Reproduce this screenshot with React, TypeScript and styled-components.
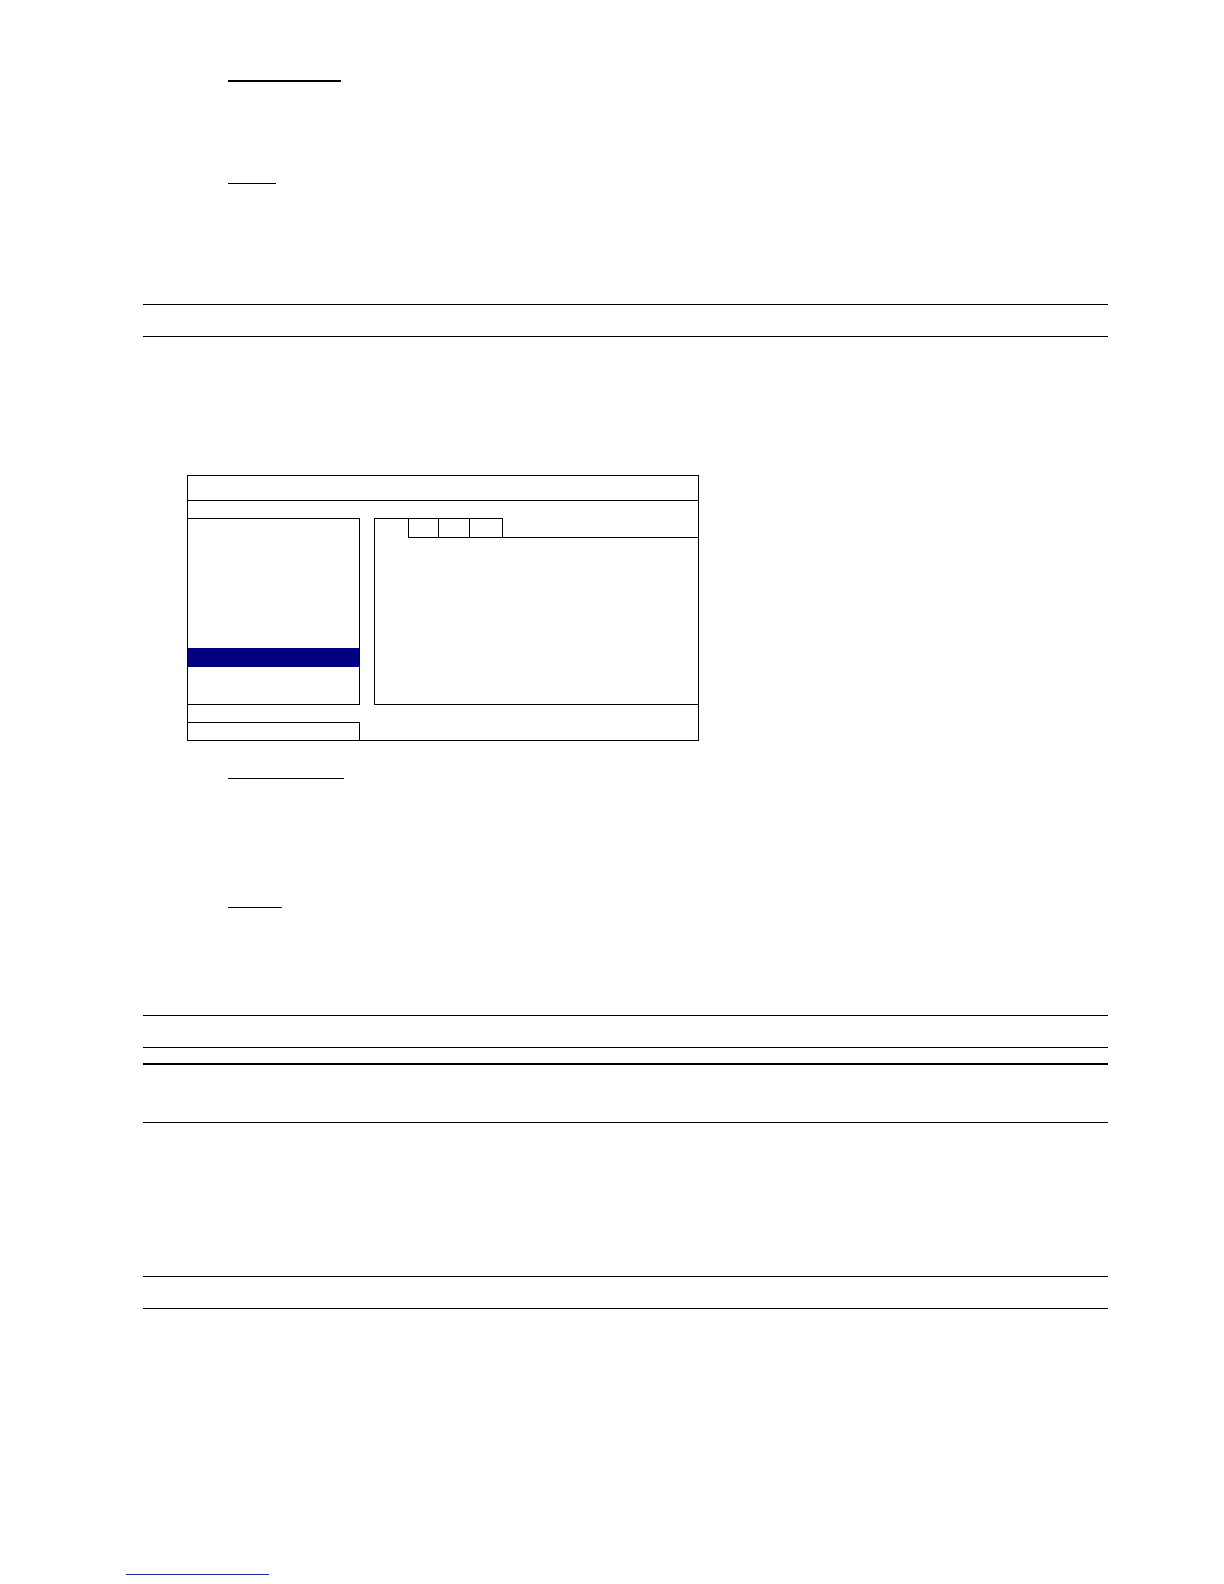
import styled, {createGlobalStyle} from "styled-components";

const INK = "#000";
const MENU_BLUE = "#000080";
const LINK_BLUE = "#1d2a9e";
const TABLE_LEFT = 143;
const TABLE_WIDTH = 965;

const GlobalStyle = createGlobalStyle`
    html, body {
        margin: 0;
        padding: 0;
        background: #fff;
    }
    body {
        font-family: "Liberation Serif", "Times New Roman", serif;
    }
    * {
        box-sizing: border-box;
    }
`;

const Page = styled.div`
    width: 1224px;
    min-height: 1584px;
    display: flex;
    flex-direction: column;
    align-items: flex-start;
`;

// underline under a heading whose text is not on this page
const HeadingRule = styled.div<{top: number; left: number; width: number; thickness?: number; color?: string}>`
    margin-top: ${props => props.top}px;
    margin-left: ${props => props.left}px;
    width: ${props => props.width}px;
    height: ${props => props.thickness ?? 1}px;
    background: ${props => props.color ?? INK};
`;

const Table = styled.div<{top: number}>`
    margin-top: ${props => props.top}px;
    margin-left: ${TABLE_LEFT}px;
    width: ${TABLE_WIDTH}px;
    border-top: 1px solid ${INK};
    display: flex;
    flex-direction: column;
`;

const TableRow = styled.div<{height: number; rule?: number}>`
    height: ${props => props.height + (props.rule ?? 1)}px;
    border-bottom: ${props => props.rule ?? 1}px solid ${INK};
`;

// on-screen menu drawing
const Screen = styled.div`
    margin-top: 138px;
    margin-left: 187px;
    width: 512px;
    border: 1px solid ${INK};
    display: flex;
    flex-direction: column;
`;

const TitleBar = styled.div`
    height: 25px;
    border-bottom: 1px solid ${INK};
`;

const Gap = styled.div<{size: number}>`
    height: ${props => props.size}px;
`;

const Panels = styled.div`
    display: flex;
    gap: 14px;
    height: 187px;
`;

const MenuList = styled.div`
    width: 172px;
    border-top: 1px solid ${INK};
    border-right: 1px solid ${INK};
    border-bottom: 1px solid ${INK};
    display: flex;
    flex-direction: column;
`;

const MenuItem = styled.div<{selected?: boolean}>`
    height: ${props => (props.selected ? 19 : 129)}px;
    background: ${props => (props.selected ? MENU_BLUE : "transparent")};
`;

const Detail = styled.div`
    flex: 1;
    border-left: 1px solid ${INK};
    border-bottom: 1px solid ${INK};
    display: flex;
    flex-direction: column;
`;

const TabRow = styled.div`
    display: flex;
    height: 20px;
`;

const TabLead = styled.div`
    width: 33px;
    border-top: 1px solid ${INK};
`;

const Tab = styled.div<{width: number; first?: boolean}>`
    width: ${props => props.width}px;
    border-top: 1px solid ${INK};
    border-bottom: 1px solid ${INK};
    border-right: 1px solid ${INK};
    border-left: ${props => (props.first ? `1px solid ${INK}` : "none")};
`;

const TabFill = styled.div`
    flex: 1;
    border-bottom: 1px solid ${INK};
`;

const StatusBox = styled.div`
    width: 172px;
    height: 18px;
    border-top: 1px solid ${INK};
    border-right: 1px solid ${INK};
`;

const tabs = [31, 31, 33];

export default function App() {
    return (
        <>
            <GlobalStyle />
            <Page>
                <HeadingRule top={80} left={228} width={113} thickness={2} />
                <HeadingRule top={101} left={228} width={48} />

                <Table top={120}>
                    <TableRow height={31} />
                </Table>

                <Screen>
                    <TitleBar />
                    <Gap size={17} />
                    <Panels>
                        <MenuList>
                            <MenuItem />
                            <MenuItem selected />
                        </MenuList>
                        <Detail>
                            <TabRow>
                                <TabLead />
                                {tabs.map((width, index) => (
                                    <Tab key={index} width={width} first={index === 0} />
                                ))}
                                <TabFill />
                            </TabRow>
                        </Detail>
                    </Panels>
                    <Gap size={17} />
                    <StatusBox />
                </Screen>

                <HeadingRule top={37} left={228} width={116} />
                <HeadingRule top={128} left={228} width={54} />

                <Table top={107}>
                    <TableRow height={31} />
                    <TableRow height={15} rule={2} />
                    <TableRow height={57} />
                </Table>

                <Table top={153}>
                    <TableRow height={31} />
                </Table>

                <HeadingRule top={265} left={126} width={143} color={LINK_BLUE} />
            </Page>
        </>
    );
}
